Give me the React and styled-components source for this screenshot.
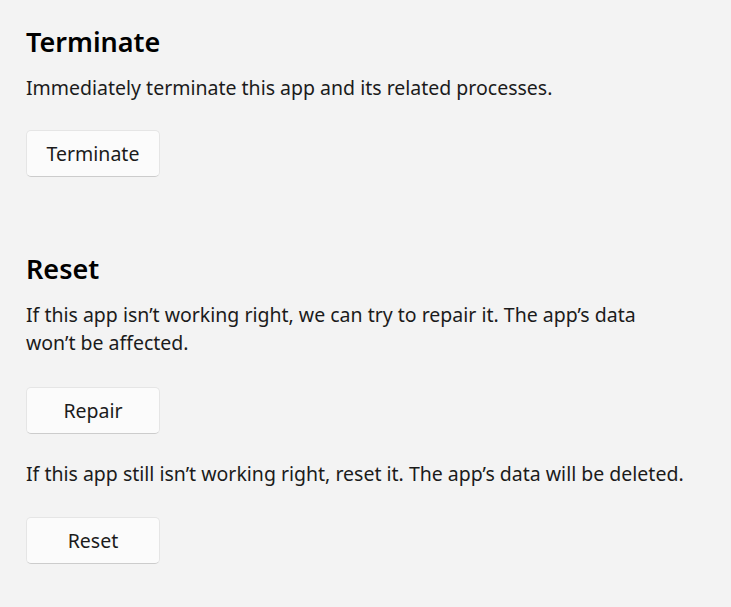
import React from "react";
import styled, { createGlobalStyle } from "styled-components";

const Global = createGlobalStyle`
  html, body { margin: 0; padding: 0; background: #f3f3f3; }
  body { font-family: "Noto Sans", "Open Sans", sans-serif; color: #1b1b1b; }
`;

const Page = styled.div`
  padding: 24px 26px 0 26px;
  display: flex;
  flex-direction: column;
`;

const Section = styled.section`
  display: flex;
  flex-direction: column;
  align-items: flex-start;
  margin-top: ${(p) => p.$top || 0}px;
`;

const Heading = styled.h2`
  margin: 0;
  font-size: 27px;
  line-height: 36px;
  font-weight: 600;
  color: #000;
`;

const Text = styled.p`
  margin: ${(p) => p.$top || 0}px 0 0 0;
  font-size: 19.5px;
  line-height: 28px;
  color: #1b1b1b;
  max-width: ${(p) => p.$max || 690}px;
`;

const Button = styled.button`
  margin-top: ${(p) => p.$top || 0}px;
  width: 134px;
  height: 47px;
  box-sizing: border-box;
  background: #fbfbfb;
  border: 1px solid #e5e5e5;
  border-bottom-color: #cccccc;
  border-radius: 5px;
  font-family: inherit;
  font-size: 19.5px;
  color: #1b1b1b;
  padding: 0;
  cursor: default;
`;

export default function App() {
  return (
    <>
      <Global />
      <Page>
        <Section>
          <Heading>Terminate</Heading>
          <Text $top={14}>Immediately terminate this app and its related processes.</Text>
          <Button $top={28}>Terminate</Button>
        </Section>
        <Section $top={74}>
          <Heading>Reset</Heading>
          <Text $top={14} $max={645}>
            If this app isn’t working right, we can try to repair it. The app’s data won’t be affected.
          </Text>
          <Button $top={30}>Repair</Button>
          <Text $top={26}>
            If this app still isn’t working right, reset it. The app’s data will be deleted.
          </Text>
          <Button $top={29}>Reset</Button>
        </Section>
      </Page>
    </>
  );
}
